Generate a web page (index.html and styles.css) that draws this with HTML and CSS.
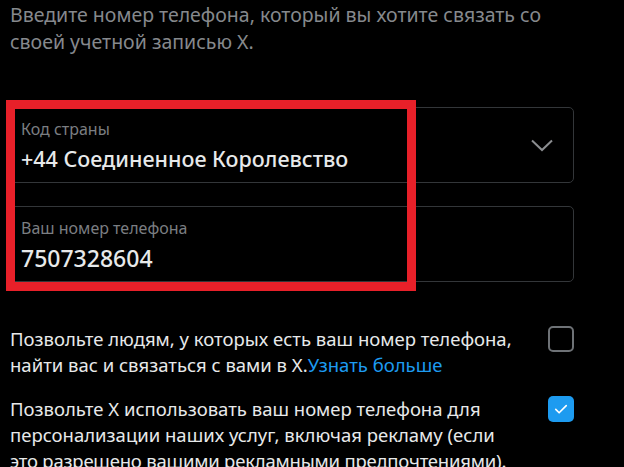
FILE: index.html
```html
<!DOCTYPE html>
<html lang="ru">
<head>
<meta charset="utf-8">
<link rel="stylesheet" href="styles.css">
</head>
<body>
<main class="page">
  <p class="intro">Введите номер телефона, который вы хотите связать со своей учетной записью X.</p>
  <section class="fields">
    <label class="field">
      <span class="field-text">
        <span class="field-label">Код страны</span>
        <span class="field-value">+44 Соединенное Королевство</span>
      </span>
      <svg class="chevron" viewBox="0 0 24 24" width="24" height="24" aria-hidden="true"><path d="M2 7.5l10 9.5 10-9.5" fill="none" stroke="currentColor" stroke-width="2"/></svg>
    </label>
    <label class="field">
      <span class="field-text">
        <span class="field-label">Ваш номер телефона</span>
        <span class="field-value num">7507328604</span>
      </span>
    </label>
    <div class="highlight"></div>
  </section>
  <div class="option">
    <p class="option-text">Позвольте людям, у которых есть ваш номер телефона, найти вас и связаться с вами в X.<a class="link" href="#">Узнать больше</a></p>
    <span class="checkbox"></span>
  </div>
  <div class="option">
    <p class="option-text">Позвольте X использовать ваш номер телефона для персонализации наших услуг, включая рекламу (если<br><span class="keep">это разрешено вашими рекламными предпочтениями).</span></p>
    <span class="checkbox checked"><svg viewBox="0 0 24 24" width="18" height="18" aria-hidden="true"><path d="M5 12.5l4.5 4.5L19 7.5" fill="none" stroke="#fff" stroke-width="2.2" stroke-linecap="round" stroke-linejoin="round"/></svg></span>
  </div>
</main>
</body>
</html>
```
FILE: styles.css
```css
html, body {
  margin: 0;
  background: #000;
}
body {
  font-family: "Noto Sans", "Open Sans", sans-serif;
  color: #e7e9ea;
  overflow: hidden;
  height: 467px;
}
.page {
  width: 564px;
  padding: 0 0 0 10px;
}
.intro {
  margin: 0;
  padding-top: 1px;
  font-size: 19.5px;
  line-height: 27px;
  color: #86898d;
  width: 545px;
}
.fields {
  position: relative;
  margin-top: 52px;
  display: flex;
  flex-direction: column;
  gap: 23px;
}
.field {
  display: flex;
  align-items: center;
  height: 76px;
  box-sizing: border-box;
  border: 1px solid #333639;
  border-radius: 5px;
  padding: 0 10px;
}
.field-text {
  flex: 1;
  align-self: flex-start;
  display: flex;
  flex-direction: column;
  padding-top: 11px;
}
.field-label {
  font-size: 16px;
  line-height: 20px;
  color: #7b7e82;
}
.field-value {
  margin-top: 5px;
  font-size: 21.5px;
  line-height: 30px;
  color: #e7e9ea;
  font-weight: 500;
}
.field-value.num {
  font-size: 23px;
}
.chevron {
  width: 24px;
  height: 24px;
  color: #8b8d90;
  margin-right: 9px;
}
.highlight {
  position: absolute;
  left: -4px;
  top: -7px;
  width: 410px;
  height: 191px;
  box-sizing: border-box;
  border: 9px solid #e82029;
  pointer-events: none;
}
.option {
  display: flex;
  justify-content: space-between;
  align-items: flex-start;
  margin-top: 44px;
}
.option + .option {
  margin-top: 18px;
}
.option-text {
  margin: 0;
  width: 525px;
  font-size: 18.5px;
  line-height: 26px;
  color: #e7e9ea;
}
.keep {
  white-space: nowrap;
  letter-spacing: -0.2px;
}
.link {
  color: #1d9bf0;
  text-decoration: none;
}
.checkbox {
  flex: none;
  width: 26px;
  height: 26px;
  box-sizing: border-box;
  border: 2px solid #6e7276;
  border-radius: 5px;
  margin-top: 0;
  display: flex;
  align-items: center;
  justify-content: center;
}
.checkbox.checked {
  border: none;
  background: #1d9bf0;
}
```
